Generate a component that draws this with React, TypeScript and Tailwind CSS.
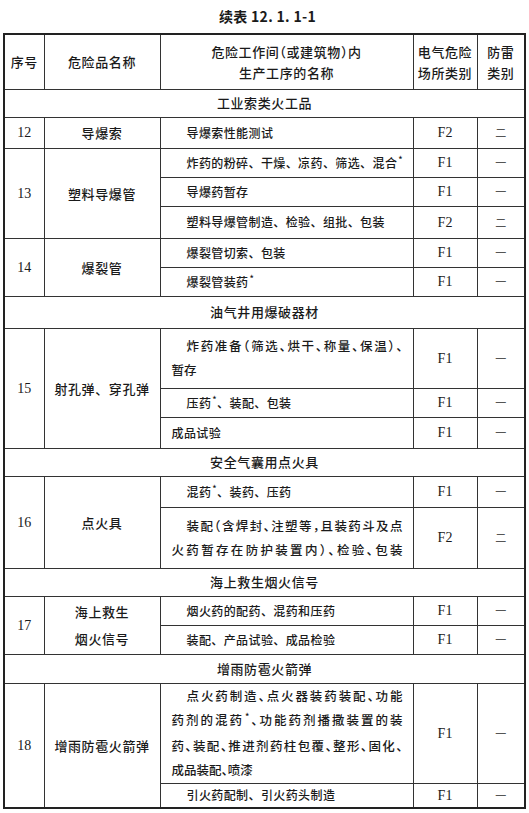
import type { ReactNode } from "react";

const cjk = "font-['Noto_Sans_CJK_SC',sans-serif]";
const serif = "font-['Liberation_Serif','Noto_Sans_CJK_SC',serif]";

function Star() {
  return <span className="relative -top-[5px] ml-[1px] text-[9px]">*</span>;
}

// a full-width line that is spread over the cell, like the printed table
function Just({ children, first }: { children: ReactNode; first?: boolean }) {
  return (
    <div className={`[text-align-last:justify] text-justify ${first ? "pl-[15px]" : ""}`}>
      {children}
    </div>
  );
}

type Proc = {
  text: ReactNode;
  f: string;
  lv: string;
  h: string;
  flat?: boolean;
  block?: boolean;
};

type Item = { no: string; name: ReactNode; procs: Proc[] };
type Group = { title: string; h: string; items: Item[] };

const groups: Group[] = [
  {
    title: "工业索类火工品",
    h: "h-[28px]",
    items: [
      {
        no: "12",
        name: "导爆索",
        procs: [{ text: "导爆索性能测试", f: "F2", lv: "二", h: "h-[31px]" }],
      },
      {
        no: "13",
        name: "塑料导爆管",
        procs: [
          {
            text: (
              <>
                炸药的粉碎、干燥、凉药、筛选、混合
                <Star />
              </>
            ),
            f: "F1",
            lv: "一",
            h: "h-[29px]",
          },
          { text: "导爆药暂存", f: "F1", lv: "一", h: "h-[29px]" },
          { text: "塑料导爆管制造、检验、组批、包装", f: "F2", lv: "二", h: "h-[32px]" },
        ],
      },
      {
        no: "14",
        name: "爆裂管",
        procs: [
          { text: "爆裂管切索、包装", f: "F1", lv: "一", h: "h-[29px]" },
          {
            text: (
              <>
                爆裂管装药
                <Star />
              </>
            ),
            f: "F1",
            lv: "一",
            h: "h-[29px]",
          },
        ],
      },
    ],
  },
  {
    title: "油气井用爆破器材",
    h: "h-[32px]",
    items: [
      {
        no: "15",
        name: "射孔弹、穿孔弹",
        procs: [
          {
            text: (
              <>
                <Just first>炸药准备（筛选、烘干、称量、保温）、</Just>
                <div>暂存</div>
              </>
            ),
            block: true,
            f: "F1",
            lv: "一",
            h: "h-[60px]",
          },
          {
            text: (
              <>
                压药
                <Star />
                、装配、包装
              </>
            ),
            f: "F1",
            lv: "一",
            h: "h-[29px]",
          },
          { text: "成品试验", flat: true, f: "F1", lv: "一", h: "h-[31px]" },
        ],
      },
    ],
  },
  {
    title: "安全气囊用点火具",
    h: "h-[28px]",
    items: [
      {
        no: "16",
        name: "点火具",
        procs: [
          {
            text: (
              <>
                混药
                <Star />
                、装药、压药
              </>
            ),
            f: "F1",
            lv: "一",
            h: "h-[31px]",
          },
          {
            text: (
              <>
                <Just first>装配（含焊封、注塑等，且装药斗及点</Just>
                <Just>火药暂存在防护装置内）、检验、包装</Just>
              </>
            ),
            block: true,
            f: "F2",
            lv: "二",
            h: "h-[61px]",
          },
        ],
      },
    ],
  },
  {
    title: "海上救生烟火信号",
    h: "h-[28px]",
    items: [
      {
        no: "17",
        name: (
          <>
            海上救生
            <br />
            烟火信号
          </>
        ),
        procs: [
          { text: "烟火药的配药、混药和压药", f: "F1", lv: "一", h: "h-[29px]" },
          { text: "装配、产品试验、成品检验", f: "F1", lv: "一", h: "h-[29px]" },
        ],
      },
    ],
  },
  {
    title: "增雨防雹火箭弹",
    h: "h-[29px]",
    items: [
      {
        no: "18",
        name: "增雨防雹火箭弹",
        procs: [
          {
            text: (
              <>
                <Just first>点火药制造、点火器装药装配、功能</Just>
                <Just>
                  药剂的混药
                  <Star />
                  、功能药剂播撒装置的装
                </Just>
                <Just>药、装配、推进剂药柱包覆、整形、固化、</Just>
                <div>成品装配、喷漆</div>
              </>
            ),
            block: true,
            f: "F1",
            lv: "一",
            h: "h-[100px]",
          },
          { text: "引火药配制、引火药头制造", f: "F1", lv: "一", h: "h-[25px]" },
        ],
      },
    ],
  },
];

const td = "border border-[#333] p-0";

export default function App() {
  return (
    <div className={`w-[529px] bg-white text-[#1a1a1a] font-medium ${cjk}`}>
      <div className="flex h-[33px] items-center justify-center pl-[6px] text-[14px] font-bold tracking-[0.3px]">
        续表 12. 1. 1-1
      </div>

      <table className="ml-[3px] w-[521px] table-fixed border-collapse border-2 border-[#222] text-[13px]">
        <colgroup>
          <col className="w-[40px]" />
          <col className="w-[116px]" />
          <col className="w-[253px]" />
          <col className="w-[64px]" />
          <col className="w-[48px]" />
        </colgroup>
        <tbody>
          <tr className="h-[55px] text-center leading-[21px] tracking-[0.6px]">
            <td className={td}>序号</td>
            <td className={td}>危险品名称</td>
            <td className={`${td} [font-feature-settings:'halt']`}>
              危险工作间（或建筑物）内
              <br />
              生产工序的名称
            </td>
            <td className={td}>
              电气危险
              <br />
              场所类别
            </td>
            <td className={td}>
              防雷
              <br />
              类别
            </td>
          </tr>

          {groups.map((group) => (
            <>
              <tr key={group.title} className={group.h}>
                <td colSpan={5} className={`${td} text-center tracking-[0.6px]`}>
                  {group.title}
                </td>
              </tr>
              {group.items.map((item) =>
                item.procs.map((proc, i) => (
                  <tr key={item.no + i} className={proc.h}>
                    {i === 0 && (
                      <>
                        <td
                          rowSpan={item.procs.length}
                          className={`${td} text-center text-[14px] font-normal ${serif}`}
                        >
                          {item.no}
                        </td>
                        <td
                          rowSpan={item.procs.length}
                          className={`${td} text-center leading-[27px] tracking-[0.6px]`}
                        >
                          {item.name}
                        </td>
                      </>
                    )}
                    <td className={`${td} pl-[11px] text-[12px] tracking-[0.4px]`}>
                      {proc.block ? (
                        <div className="w-[231px] text-[12.5px] leading-[24px] tracking-normal [font-feature-settings:'halt']">
                          {proc.text}
                        </div>
                      ) : (
                        <div className={`whitespace-nowrap ${proc.flat ? "" : "pl-[15px]"}`}>
                          {proc.text}
                        </div>
                      )}
                    </td>
                    <td className={`${td} text-center text-[14px] font-normal ${serif}`}>
                      {proc.f}
                    </td>
                    <td className={`${td} text-center text-[11px] font-normal text-[#555]`}>
                      {proc.lv}
                    </td>
                  </tr>
                ))
              )}
            </>
          ))}
        </tbody>
      </table>
    </div>
  );
}
